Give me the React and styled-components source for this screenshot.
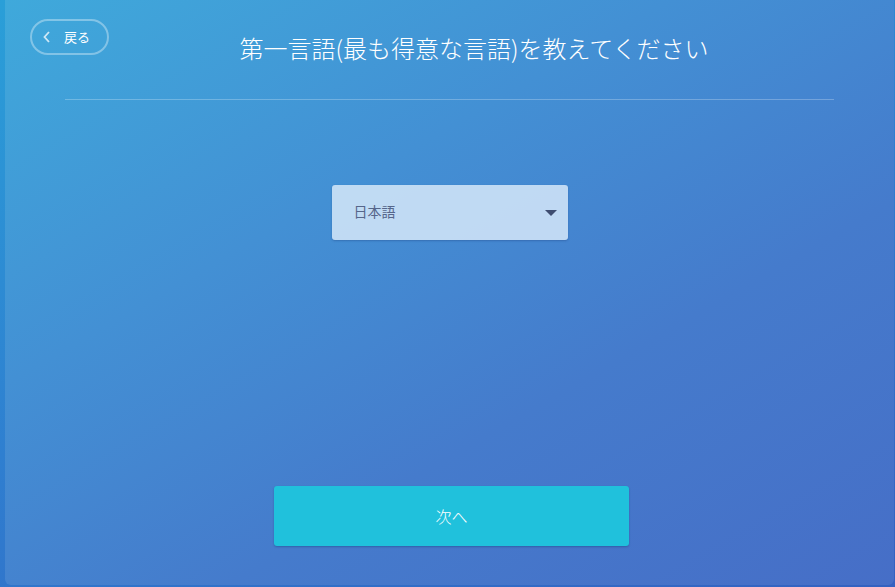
import React, { useState } from "react";
import styled, { createGlobalStyle } from "styled-components";

const GlobalStyle = createGlobalStyle`
  html, body {
    margin: 0;
    padding: 0;
    height: 100%;
  }
  body {
    background: linear-gradient(160deg, #2a9fd8 0%, #2f7fd0 50%, #3461c0 100%);
    font-family: "Noto Sans CJK JP", "Noto Sans", sans-serif;
    overflow: hidden;
  }
`

const Page = styled.div`
  width: 895px;
  height: 587px;
  padding: 0 1px 2px 5px;
  box-sizing: border-box;
  display: flex;
`

const Card = styled.div`
  flex: 1;
  border-radius: 0 0 6px 6px;
  background: linear-gradient(150deg, #3fa9db 0%, #4390d4 35%, #457bcc 65%, #466ec7 100%);
  display: flex;
  flex-direction: column;
  align-items: center;
  padding: 19px 0 39px;
  box-sizing: border-box;
`

const Header = styled.div`
  width: 100%;
  display: grid;
  grid-template-columns: 25px 79px 1fr 55px;
  align-items: start;
`

const BackButton = styled.button`
  grid-column: 2;
  height: 36px;
  border: 2px solid rgba(255, 255, 255, 0.35);
  border-radius: 18px;
  background: transparent;
  color: #fff;
  display: flex;
  align-items: center;
  gap: 12px;
  padding: 0 0 1px 10px;
  font-family: inherit;
  font-size: 13px;
  cursor: pointer;
`

const Title = styled.h1`
  grid-column: 3;
  margin: 12px 0 0;
  text-align: center;
  color: #fff;
  font-size: 24px;
  line-height: 34px;
  font-weight: 300;
  white-space: nowrap;
`

const Divider = styled.hr`
  width: 769px;
  border: none;
  border-top: 1px solid rgba(255, 255, 255, 0.25);
  margin: 34px 0 0 0;
`

const SelectBox = styled.div`
  margin-top: 85px;
  width: 236px;
  height: 55px;
  border-radius: 3px;
  background: rgba(220, 235, 250, 0.82);
  box-shadow: 0 1px 2px rgba(30, 60, 120, 0.35);
  display: flex;
  align-items: center;
  justify-content: space-between;
  padding: 0 11px 3px 22px;
  box-sizing: border-box;
  color: #56668a;
  font-size: 14px;
`

const Caret = styled.span`
  width: 0;
  height: 0;
  margin-top: 3px;
  border-left: 6px solid transparent;
  border-right: 6px solid transparent;
  border-top: 6px solid #3e4d70;
`

const Spacer = styled.div`
  flex: 1;
`

const NextButton = styled.button`
  width: 355px;
  height: 60px;
  margin-left: 4px;
  border: none;
  border-radius: 3px;
  background: #20c1dc;
  box-shadow: 0 1px 2px rgba(20, 60, 120, 0.4);
  color: #fff;
  font-family: inherit;
  font-size: 16px;
  font-weight: 300;
  cursor: pointer;
`

const ChevronLeft = () => (
  <svg width="10" height="14" viewBox="0 0 10 14">
    <path d="M7 2 L2.5 7 L7 12" fill="none" stroke="rgba(255,255,255,0.75)" strokeWidth="1.8" />
  </svg>
);

const App = () => {
  const [lang] = useState("日本語");
  return (
    <Page>
      <GlobalStyle />
      <Card>
        <Header>
          <BackButton>
            <ChevronLeft />
            戻る
          </BackButton>
          <Title>第一言語(最も得意な言語)を教えてください</Title>
        </Header>
        <Divider />
        <SelectBox>
          {lang}
          <Caret />
        </SelectBox>
        <Spacer />
        <NextButton>次へ</NextButton>
      </Card>
    </Page>
  );
};

export default App;
